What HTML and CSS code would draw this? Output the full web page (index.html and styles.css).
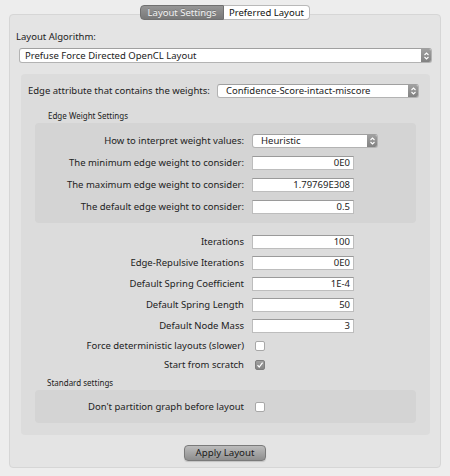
FILE: index.html
```html
<!DOCTYPE html>
<html>
<head>
<meta charset="utf-8">
<link rel="stylesheet" href="styles.css">
</head>
<body>
<div class="tabs">
  <div class="tab tab-active">Layout Settings</div>
  <div class="tab">Preferred Layout</div>
</div>
<div class="panel">
  <div class="algo-label">Layout Algorithm:</div>
  <div class="select select-algo">
    <span class="select-value">Prefuse Force Directed OpenCL Layout</span>
    <span class="stepper"><svg width="7" height="10" viewBox="0 0 7 10"><path d="M1.5 4 L3.5 2 L5.5 4 M1.5 6 L3.5 8 L5.5 6" fill="none" stroke="#fff" stroke-width="1.1"/></svg></span>
  </div>
  <div class="inner">
    <div class="attr-row">
      <span class="label">Edge attribute that contains the weights:</span>
      <div class="select select-attr">
        <span class="select-value">Confidence-Score-intact-miscore</span>
        <span class="stepper"><svg width="7" height="10" viewBox="0 0 7 10"><path d="M1.5 4 L3.5 2 L5.5 4 M1.5 6 L3.5 8 L5.5 6" fill="none" stroke="#fff" stroke-width="1.1"/></svg></span>
      </div>
    </div>
    <div class="group-title">Edge Weight Settings</div>
    <div class="sub sub-weights">
      <div class="row">
        <span class="label">How to interpret weight values:</span>
        <div class="select select-small">
          <span class="select-value">Heuristic</span>
          <span class="stepper"><svg width="7" height="10" viewBox="0 0 7 10"><path d="M1.5 4 L3.5 2 L5.5 4 M1.5 6 L3.5 8 L5.5 6" fill="none" stroke="#fff" stroke-width="1.1"/></svg></span>
        </div>
      </div>
      <div class="row"><span class="label">The minimum edge weight to consider:</span><span class="input">0E0</span></div>
      <div class="row"><span class="label">The maximum edge weight to consider:</span><span class="input">1.79769E308</span></div>
      <div class="row"><span class="label">The default edge weight to consider:</span><span class="input">0.5</span></div>
    </div>
    <div class="rows">
      <div class="row"><span class="label">Iterations</span><span class="input">100</span></div>
      <div class="row"><span class="label">Edge-Repulsive Iterations</span><span class="input">0E0</span></div>
      <div class="row"><span class="label">Default Spring Coefficient</span><span class="input">1E-4</span></div>
      <div class="row"><span class="label">Default Spring Length</span><span class="input">50</span></div>
      <div class="row"><span class="label">Default Node Mass</span><span class="input">3</span></div>
      <div class="row row-check"><span class="label">Force deterministic layouts (slower)</span><span class="checkbox"></span></div>
      <div class="row row-check"><span class="label">Start from scratch</span><span class="checkbox checked"><svg width="8" height="8" viewBox="0 0 8 8"><path d="M1.5 4.2 L3.2 6 L6.6 1.6" fill="none" stroke="#fff" stroke-width="1.2"/></svg></span></div>
    </div>
    <div class="group-title group-title-std">Standard settings</div>
    <div class="sub sub-std">
      <div class="row row-check"><span class="label">Don't partition graph before layout</span><span class="checkbox"></span></div>
    </div>
  </div>
  <div class="actions">
    <div class="button">Apply Layout</div>
  </div>
</div>
</body>
</html>
```

FILE: styles.css
```css
* { box-sizing: border-box; }
html, body { margin: 0; padding: 0; }
body {
  background: #ededed;
  font-family: "Noto Sans", "Liberation Sans", Arial, sans-serif;
  font-size: 9.5px;
  color: #222;
  width: 450px;
  height: 476px;
  padding-top: 5px;
}
.tabs {
  display: flex;
  justify-content: center;
  position: relative;
  z-index: 1;
  height: 15px;
}
.tab {
  height: 15px;
  width: 86px;
  line-height: 13px;
  text-align: center;
  font-size: 9.5px;
  background: #fff;
  border: 1px solid #b9b9b9;
  border-left: none;
  border-radius: 0 4px 4px 0;
  color: #111;
}
.tab-active {
  width: 84px;
  background: linear-gradient(#969696, #787878);
  border: 1px solid #707070;
  border-radius: 4px 0 0 4px;
  color: #f2f2f2;
  text-shadow: 0 -1px 0 rgba(0,0,0,0.2);
}
.panel {
  margin: -6px 9px 0 9px;
  height: 454px;
  background: #e4e4e4;
  border: 1px solid #d6d6d6;
  border-radius: 4px;
  padding-top: 16px;
  display: flex;
  flex-direction: column;
}
.algo-label {
  margin-left: 6px;
  height: 12px;
  line-height: 12px;
}
.select {
  display: flex;
  align-items: center;
  height: 14px;
  background: #fff;
  border: 1px solid #b3b3b3;
  border-top-color: #a0a0a0;
  border-radius: 3px;
  overflow: hidden;
}
.select-value {
  flex: 1;
  padding-left: 5px;
  white-space: nowrap;
  line-height: 12px;
}
.stepper {
  width: 10px;
  height: 100%;
  display: flex;
  align-items: center;
  justify-content: center;
  background: linear-gradient(#a0a0a0, #828282);
}
.select-algo {
  margin: 5px 8px 0 9px;
  height: 15px;
}
.inner {
  margin: 11px 10px 0 11px;
  height: 361px;
  background: #dcdcdc;
  border-radius: 4px;
  padding: 10px 0 0 0;
  display: flex;
  flex-direction: column;
}
.attr-row {
  display: flex;
  align-items: center;
  padding-left: 7px;
  padding-right: 11px;
  height: 14px;
}
.select-attr {
  margin-left: auto;
  width: 202px;
}
.select-attr .select-value { padding-left: 8px; }
.group-title {
  font-size: 8px;
  height: 12px;
  line-height: 12px;
  margin: 12px 0 1px 27px;
  color: #222;
}
.group-title-std {
  margin: 6px 0 1px 26px;
}
.sub {
  margin: 0 14px;
  background: #d4d4d4;
  border-radius: 4px;
  display: flex;
  flex-direction: column;
}
.sub-weights {
  padding: 11px 0 9px 0;
  gap: 8px;
}
.sub-std {
  padding: 11px 0 10px 0;
}
.rows {
  margin: 12px 14px 0 14px;
  display: flex;
  flex-direction: column;
  gap: 7px;
}
.row {
  display: grid;
  grid-template-columns: 209px 1fr;
  column-gap: 8px;
  align-items: center;
  height: 14px;
}
.row-check { height: 12px; }
.label {
  text-align: right;
  white-space: nowrap;
  line-height: 12px;
}
.attr-row .label { text-align: left; }
.select-small { width: 126px; }
.select-small .select-value { padding-left: 8px; }
.input {
  width: 102px;
  height: 14px;
  background: #fff;
  border: 1px solid #bdbdbd;
  border-top-color: #9a9a9a;
  text-align: right;
  padding-right: 3px;
  line-height: 12px;
}
.checkbox {
  width: 10px;
  height: 10px;
  margin-left: 3px;
  background: #fff;
  border: 1px solid #a8a8a8;
  border-radius: 2px;
  display: flex;
  align-items: center;
  justify-content: center;
}
.checkbox.checked {
  background: linear-gradient(#a0a0a0, #858585);
  border-color: #7d7d7d;
}
.actions {
  display: flex;
  justify-content: center;
  margin-top: 10px;
}
.button {
  width: 82px;
  height: 16px;
  line-height: 14px;
  text-align: center;
  font-size: 9.7px;
  color: #1a1a1a;
  background: linear-gradient(#bcbcbc, #8e8e8e);
  border: 1px solid #7a7a7a;
  border-radius: 4px;
  box-shadow: 0 1px 1px rgba(0,0,0,0.15);
}
```
